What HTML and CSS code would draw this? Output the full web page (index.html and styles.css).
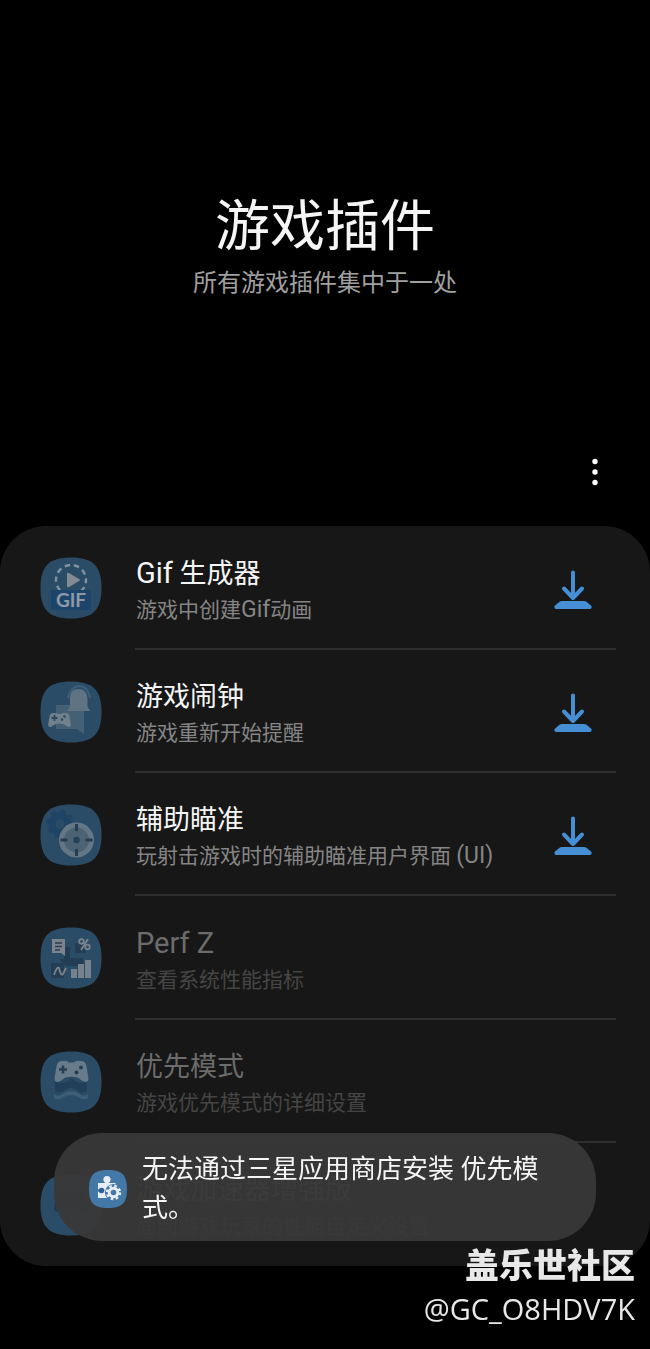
FILE: index.html
```html
<!DOCTYPE html>
<html lang="zh-CN">
<head>
<meta charset="utf-8">
<meta name="viewport" content="width=device-width, initial-scale=1">
<title>游戏插件</title>
<link rel="stylesheet" href="styles.css">
</head>
<body>
<svg class="defs" aria-hidden="true">
  <symbol id="tile" viewBox="0 0 62 62"><path d="M31 .5C53 .5 61.500 9 61.500 31S53 61.500 31 61.500 .5 53 .5 31 9 .5 31 .5Z"/></symbol>
  <symbol id="download" viewBox="0 0 38 40">
    <path d="M19 2.500V28M10 18.500l9 9.500 9-9.500" fill="none" stroke="currentColor" stroke-width="4" stroke-linecap="round" stroke-linejoin="round"/>
    <path d="M8 31h22q1.500 0 2.500.8l4.500 3.700q1 1 .5 2.200-.4 1.300-2 1.300h-33q-1.600 0-2-1.300-.5-1.200.5-2.200l4.500-3.700q1-.8 2.500-.8Z" fill="currentColor"/>
  </symbol>
  <symbol id="pad" viewBox="0 0 36 24">
    <path d="M8 1h4q2 0 3 1.500h6Q22 1 24 1h4q4.500 0 5.500 5l2 11.500q.8 5.500-3 5.500-2.500 0-5.500-3-3-2.500-9-2.500T9 20q-3 3-5.500 3-3.800 0-3-5.500L2.500 6Q3.500 1 8 1Z"/>
  </symbol>
</svg>

<header class="hero">
  <h1 class="hero-title">游戏插件</h1>
  <p class="hero-subtitle">所有游戏插件集中于一处</p>
</header>

<div class="toolbar">
  <button class="more" type="button" aria-label="更多选项">
    <svg viewBox="0 0 8 28" width="8" height="28"><circle cx="4" cy="3.500" r="2.700"/><circle cx="4" cy="14" r="2.700"/><circle cx="4" cy="24.500" r="2.700"/></svg>
  </button>
</div>

<main>
  <ul class="list">
    <li class="row">
      <svg class="icon" viewBox="0 0 62 62"><use href="#tile"/>
        <circle cx="31" cy="23" r="15" fill="none" stroke="#8292a0" stroke-width="2.400" stroke-dasharray="5.400 4" stroke-dashoffset="2"/>
        <path d="M27 17v12q0 2 2 1l10-6q2-1 0-2l-10-6q-2-1-2 1Z" fill="#848b95"/>
        <path d="M11 33h40v20H11z" fill="#1d456b"/>
        <text class="gif" x="31" y="49.500" text-anchor="middle">GIF</text>
      </svg>
      <div class="content">
        <div class="text"><h2 class="name"><span class="latin">Gif</span> 生成器</h2><p class="desc">游戏中创建<span class="latin">Gif</span>动画</p></div>
        <button class="get" type="button" aria-label="下载 Gif 生成器"><svg width="38" height="40"><use href="#download"/></svg></button>
      </div>
    </li>
    <li class="row">
      <svg class="icon" viewBox="0 0 62 62"><use href="#tile"/>
        <path d="M16 24h28v29l-7-5H16Z" fill="#456075"/>
        <path d="M28 17q2-10 10-12 10 0 12 12" fill="none" stroke="#3f5f78" stroke-width="2"/>
        <path d="M38.500 8q8 0 9 9v8q0 2 3 5H27q3-3 3-5v-8q0-9 8.500-9Z" fill="#5f7382"/>
        <use href="#pad" x="8" y="31" width="23" height="16" fill="#71808d"/>
        <path d="M14.500 34v6m-3-3h6" stroke="#2b4a61" stroke-width="1.800"/><circle cx="24.500" cy="35.500" r="1.300" fill="#2b4a61"/><circle cx="22" cy="38.500" r="1.300" fill="#2b4a61"/>
      </svg>
      <div class="content">
        <div class="text"><h2 class="name">游戏闹钟</h2><p class="desc">游戏重新开始提醒</p></div>
        <button class="get" type="button" aria-label="下载 游戏闹钟"><svg width="38" height="40"><use href="#download"/></svg></button>
      </div>
    </li>
    <li class="row">
      <svg class="icon" viewBox="0 0 62 62"><use href="#tile"/>
        <circle cx="20" cy="20" r="8" fill="none" stroke="#1f4466" stroke-width="7"/>
        <circle cx="20" cy="20" r="12" fill="none" stroke="#1f4466" stroke-width="4" stroke-dasharray="4.700 4.725"/>
        <circle cx="36.500" cy="36" r="17.500" fill="#647786"/><circle cx="36.500" cy="36" r="12.500" fill="#4c6374"/>
        <path d="M36.500 20v7m0 18v7M20.500 36h7m18 0h7" stroke="#273d50" stroke-width="3"/>
        <circle cx="36.500" cy="36" r="3.200" fill="#20405b"/>
      </svg>
      <div class="content">
        <div class="text"><h2 class="name">辅助瞄准</h2><p class="desc">玩射击游戏时的辅助瞄准用户界面 <span class="latin">(UI)</span></p></div>
        <button class="get" type="button" aria-label="下载 辅助瞄准"><svg width="38" height="40"><use href="#download"/></svg></button>
      </div>
    </li>
    <li class="row disabled">
      <svg class="icon" viewBox="0 0 62 62"><use href="#tile"/>
        <path d="M24 20h6v11h13v8H26l-7-7h5ZM35 16h11v10H35zM11 36h13v15H11z" fill="#233e54"/>
        <path d="M12 12h13v17l-4-3h-9Z" fill="#7b848d"/><path d="M15 16h7m-7 3.500h7M15 23h5" stroke="#293d4d" stroke-width="1.600"/>
        <g fill="none" stroke="#7b848d" stroke-width="1.800"><circle cx="41.500" cy="14.500" r="2.300"/><circle cx="47.500" cy="20" r="2.300"/><path d="M48 12l-7 11M14 48q3-9 5-7 2 9 4 6l3-6"/></g>
        <path d="M31 42h6v9h-6zM38 37h6v14h-6zM45 33h6v18h-6z" fill="#75818c"/>
      </svg>
      <div class="content"><div class="text"><h2 class="name"><span class="latin">Perf Z</span></h2><p class="desc">查看系统性能指标</p></div></div>
    </li>
    <li class="row disabled">
      <svg class="icon" viewBox="0 0 62 62"><use href="#tile"/>
        <path d="M15 30q10 5 16-3 8 8 16 3v10q-6 4-10-1-6-4-12 0-5 5-10 1Z" fill="#213f58"/>
        <path d="M14 43q5 4 10-1 7-4 14 0 5 5 10 1v4q-5 3-10-1-7-4-14 0-5 4-10 1Z" fill="#3c5d76"/>
        <use href="#pad" x="14" y="9" width="35" height="23" fill="#687b8a"/>
        <path d="M23 14.500v8m-4-4h8" stroke="#243f55" stroke-width="2.600"/><circle cx="41" cy="16.500" r="2" fill="#243f55"/><circle cx="36.500" cy="21.500" r="2" fill="#243f55"/>
      </svg>
      <div class="content"><div class="text"><h2 class="name">优先模式</h2><p class="desc">游戏优先模式的详细设置</p></div></div>
    </li>
    <li class="row disabled">
      <svg class="icon" viewBox="0 0 62 62"><use href="#tile"/>
        <use href="#pad" x="14" y="16" width="34" height="23" fill="#1d3950"/>
      </svg>
      <div class="content"><div class="text"><h2 class="name">游戏加速器增强版</h2><p class="desc">面向游戏玩家的性能自定义设置</p></div></div>
    </li>
  </ul>
</main>

<div class="toast" role="status">
  <svg class="toast-icon" viewBox="0 0 38 38">
    <path d="M19 0C33 0 38 5 38 19S33 38 19 38 0 33 0 19 5 0 19 0Z" fill="#4478a6"/>
    <circle cx="18" cy="9.500" r="3.600" fill="#e6edf5"/>
    <path d="M16.500 10h3v4h-3zM9 13h17.500v15H9z" fill="#e6edf5"/>
    <circle cx="12.500" cy="20.500" r="2.800" fill="#2f6090"/><path d="M9 19.500h3v2H9z" fill="#2f6090"/>
    <circle cx="24.500" cy="22.500" r="8.600" fill="#4478a6"/>
    <circle cx="24.500" cy="22.500" r="4.300" fill="none" stroke="#e6edf5" stroke-width="3"/>
    <circle cx="24.500" cy="22.500" r="6.500" fill="none" stroke="#e6edf5" stroke-width="2.400" stroke-dasharray="2.550 2.555"/>
  </svg>
  <p class="toast-text">无法通过三星应用商店安装 优先模式。</p>
</div>

<footer class="credit">
  <strong class="credit-name">盖乐世社区</strong>
  <span class="credit-user">@GC_O8HDV7K</span>
</footer>
</body>
</html>
```
FILE: styles.css
```css
* {
  box-sizing: border-box;
}

body {
  margin: 0;
  background: #000;
  color: #f5f5f5;
  font-family: Roboto, "Noto Sans CJK SC", sans-serif;
}

h1,
h2,
p,
ul {
  margin: 0;
  padding: 0;
  font-weight: 400;
}

button {
  display: flex;
  padding: 0;
  border: 0;
  background: none;
  cursor: pointer;
}

.defs {
  position: absolute;
  width: 0;
  height: 0;
}

.hero {
  padding: 186px 24px 158px;
  text-align: center;
}

.hero-title {
  font-size: 55px;
  line-height: 80px;
}

.hero-subtitle {
  color: #a0a0a0;
  font-size: 24px;
  line-height: 34px;
}

.toolbar {
  display: flex;
  justify-content: flex-end;
  padding: 0 51px 40px;
}

.more {
  fill: #fff;
}

.list {
  border-radius: 46px;
  background: #171717;
  list-style: none;
}

.row {
  display: flex;
  align-items: center;
  gap: 33px;
  padding: 0 34px 0 40px;
}

.icon {
  flex: none;
  width: 62px;
  height: 62px;
  fill: #2b4c66;
}

.gif {
  fill: #8e9ba7;
  font-family: Lato, sans-serif;
  font-size: 19px;
  font-weight: 700;
}

.content {
  display: flex;
  flex: 1;
  align-items: center;
  justify-content: space-between;
  padding: 26px 24px 21px 1px;
  border-bottom: 2px solid #2f2f2f;
}

.row:last-child .content {
  border-color: transparent;
}

.text {
  padding-top: 2px;
}

.name {
  font-size: 27px;
  line-height: 38px;
}

.name .latin {
  font-size: 29px;
}

.desc {
  color: #858585;
  font-size: 21px;
  line-height: 34px;
}

.desc .latin {
  font-size: 23px;
}

.disabled .name {
  color: #6c6c6c;
}

.disabled .desc {
  color: #454545;
}

.get {
  color: #468fd4;
}

.toast {
  position: fixed;
  right: 54px;
  bottom: 108px;
  left: 54px;
  display: flex;
  align-items: center;
  gap: 15px;
  padding: 17px 56px 13px 35px;
  border-radius: 48px;
  background: rgba(56, 56, 56, 0.94);
}

.toast-icon {
  flex: none;
  width: 38px;
  height: 38px;
}

.toast-text {
  font-size: 26px;
  line-height: 39px;
}

.credit {
  position: fixed;
  right: 15px;
  bottom: 20px;
  display: flex;
  flex-direction: column;
  align-items: flex-end;
  color: #e8e8e8;
}

.credit-name {
  font-family: "Noto Sans CJK SC", sans-serif;
  font-size: 34px;
  font-weight: 900;
  line-height: 50px;
}

.credit-user {
  font-family: "Open Sans", sans-serif;
  font-size: 29px;
  line-height: 40px;
}
```
